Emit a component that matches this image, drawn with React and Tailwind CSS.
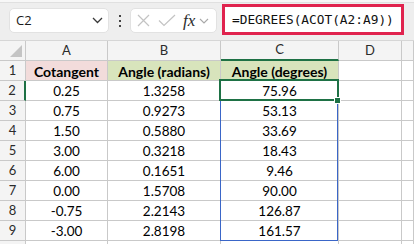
import React from "react";

const colA = ["0.25", "0.75", "1.50", "3.00", "6.00", "0.00", "-0.75", "-3.00"];
const colB = ["1.3258", "0.9273", "0.5880", "0.3218", "0.1651", "1.5708", "2.2143", "2.8198"];
const colC = ["75.96", "53.13", "33.69", "18.43", "9.46", "90.00", "126.87", "161.57"];

const grid = "border-r border-b border-[#c9c9c9]";
const hdr = "bg-[#f4f4f4] text-[#2b2b2b] text-[13px] flex items-center justify-center";
const cell = "flex items-center justify-center text-[13.5px] text-black pt-[2px]";

function Toolbar() {
  return (
    <div className="flex flex-col h-[41px] bg-[#eeeeee] border-b border-[#d6d6d6]">
      <div className="h-[3px] bg-[#f7f7f7] border-b border-[#e0e0e0]" />
      <div className="flex items-start pl-[9px]">
        <div className="mt-[5px] w-[100px] h-[25px] bg-white border border-[#e2e2e2] rounded-[5px] flex items-center justify-between pl-[6px] pr-[5px]">
          <span className="text-[13px] text-[#1b1b1b] font-['Open_Sans']">C2</span>
          <svg width="11" height="7" viewBox="0 0 11 7">
            <path d="M1 1 L5.5 5.5 L10 1" fill="none" stroke="#3a3a3a" strokeWidth="1.3" />
          </svg>
        </div>
        <div className="w-[21px] h-[25px] mt-[5px] flex flex-col items-center justify-center gap-[3px]">
          <span className="w-[2px] h-[2px] bg-[#444]" />
          <span className="w-[2px] h-[2px] bg-[#444]" />
          <span className="w-[2px] h-[2px] bg-[#444]" />
        </div>
        <div className="mt-[5px] w-[87px] h-[25px] bg-white border border-[#e2e2e2] rounded-[5px] flex items-center pl-[6px]">
          <svg width="13" height="13" viewBox="0 0 13 13">
            <path d="M1 1 L12 12 M12 1 L1 12" stroke="#c3c3c3" strokeWidth="1.2" />
          </svg>
          <svg className="ml-[8px]" width="18" height="13" viewBox="0 0 18 13">
            <path d="M1 6.5 L6 11.5 L17 1" fill="none" stroke="#c3c3c3" strokeWidth="1.2" />
          </svg>
          <span className="ml-[7px] font-['Liberation_Serif'] italic text-[17px] leading-none text-[#2b2b2b]">fx</span>
          <svg className="ml-[4px]" width="10" height="6" viewBox="0 0 10 6">
            <path d="M1 1 L5 5 L9 1" fill="none" stroke="#a8a8a8" strokeWidth="1.1" />
          </svg>
        </div>
        <div className="ml-[5px] mt-[1px] w-[182px] h-[31px] bg-white border-[3px] border-[#e0234e] flex items-center pl-[7px]">
          <span className="font-['DejaVu_Sans_Mono'] text-[12.8px] text-[#111] pt-[1px]">=DEGREES(ACOT(A2:A9))</span>
        </div>
      </div>
    </div>
  );
}

function Row({ n, a, b, c, first }) {
  const sel = n === 2;
  const bold = first ? "font-bold text-[14px]" : "";
  return (
    <div className="flex h-[20px]">
      <div
        className={`w-[26px] ${grid} ${hdr} ${
          sel ? "bg-[#d3d3d3] text-[#1e7145] border-r-2 border-r-[#1e7145]" : ""
        }`}
      >
        {n}
      </div>
      <div className={`w-[82px] ${grid} ${cell} ${first ? "bg-[#f2dcdb]" : ""} ${bold}`}>{a}</div>
      <div className={`w-[113px] ${grid} ${cell} ${first ? "bg-[#d8e4bc]" : ""} ${bold}`}>{b}</div>
      <div className={`w-[118px] ${grid} ${cell} ${first ? "bg-[#d8e4bc]" : ""} ${bold}`}>{c}</div>
      <div className={`w-[63px] ${grid}`} />
      <div className={`flex-1 ${grid}`} />
    </div>
  );
}

export default function App() {
  return (
    <div className="w-[414px] h-[244px] overflow-hidden bg-white font-['Lato']">
      <Toolbar />
      <div className="relative">
        <div className="flex h-[20px]">
          <div className={`w-[26px] ${grid} bg-[#f4f4f4] relative`}>
            <svg className="absolute left-[10px] top-[4px]" width="13" height="13" viewBox="0 0 13 13">
              <path d="M12 0 L12 12 L0 12 Z" fill="#c4c4c4" />
            </svg>
          </div>
          <div className={`w-[82px] ${grid} ${hdr}`}>A</div>
          <div className={`w-[113px] ${grid} ${hdr}`}>B</div>
          <div className={`w-[118px] ${grid} ${hdr} bg-[#d3d3d3] text-[#1e7145] border-b-2 border-b-[#1e7145]`}>C</div>
          <div className={`w-[63px] ${grid} ${hdr}`}>D</div>
          <div className={`flex-1 ${grid} bg-[#f4f4f4]`} />
        </div>
        <Row n={1} a="Cotangent" b="Angle (radians)" c="Angle (degrees)" first />
        {colA.map((a, i) => (
          <Row key={i} n={i + 2} a={a} b={colB[i]} c={colC[i]} />
        ))}
        <Row n="" a="" b="" c="" />

        <div className="absolute left-[220px] top-[39px] w-[118px] h-[161px] border border-[#3a66c8] pointer-events-none" />
        <div className="absolute left-[219px] top-[38px] w-[120px] h-[22px] border-2 border-[#1e7145] pointer-events-none" />
        <div className="absolute left-[334px] top-[56px] w-[7px] h-[7px] bg-[#1e7145] border border-white" />
      </div>
    </div>
  );
}
